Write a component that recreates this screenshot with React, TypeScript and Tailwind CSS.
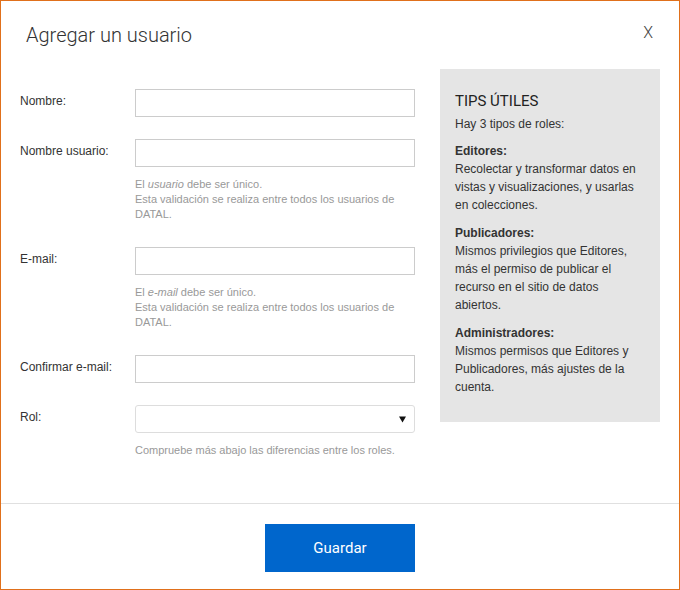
import React from "react";

const Field: React.FC<{ label: string; className?: string; children?: React.ReactNode }> = ({ label, className, children }) => {
    return (
        <div className={"flex " + (className ?? "")}>
            <div className="w-[115px] shrink-0 pt-[4px] text-[12px] leading-[16px] text-[#333]">{label}</div>
            <div className="w-[280px]">{children}</div>
        </div>
    );
};

const Help: React.FC<{ children: React.ReactNode }> = ({ children }) => (
    <p className="mt-[10px] text-[11px] leading-[15px] text-[#999]">{children}</p>
);

const TextInput: React.FC = () => <input type="text" className="block w-full h-[28px] border border-[#ccc] bg-white outline-none px-2" />;

const App: React.FC = () => {
    return (
        <div className="w-[680px] h-[590px] border border-[#e0701b] bg-white flex flex-col font-['Liberation_Sans',Arial,sans-serif]">
            <div className="flex justify-between items-start h-[68px] pl-[25px] pr-[26px] pt-[21px] font-['Roboto',sans-serif]">
                <h1 className="text-[20px] leading-[26px] text-[#333] font-light">Agregar un usuario</h1>
                <button className="text-[16px] leading-[24px] text-[#444] font-light mt-[-1px]">X</button>
            </div>
            <div className="flex flex-1 pl-[19px]">
                <div className="w-[396px] pt-[20px]">
                    <Field label="Nombre:">
                        <TextInput />
                    </Field>
                    <Field label="Nombre usuario:" className="mt-[22px]">
                        <TextInput />
                        <Help>
                            El <i>usuario</i> debe ser único.
                            <br />
                            Esta validación se realiza entre todos los usuarios de DATAL.
                        </Help>
                    </Field>
                    <Field label="E-mail:" className="mt-[25px]">
                        <TextInput />
                        <Help>
                            El <i>e-mail</i> debe ser único.
                            <br />
                            Esta validación se realiza entre todos los usuarios de DATAL.
                        </Help>
                    </Field>
                    <Field label="Confirmar e-mail:" className="mt-[25px]">
                        <TextInput />
                    </Field>
                    <Field label="Rol:" className="mt-[22px]">
                        <div className="relative h-[28px] border border-[#ddd] rounded-[3px] bg-white">
                            <svg className="absolute right-[8px] top-[10px]" width="7" height="7" viewBox="0 0 7 7">
                                <path d="M0 0.5 L7 0.5 L3.5 6.5 Z" fill="#111" />
                            </svg>
                        </div>
                        <Help>Compruebe más abajo las diferencias entre los roles.</Help>
                    </Field>
                </div>
                <div className="ml-[24px] w-[220px] h-[353px] bg-[#e5e5e5] pt-[22px] pl-[15px] pr-[20px] text-[12px] leading-[18px] text-[#333]">
                    <h2 className="text-[15px] leading-[20px] text-[#222] mb-[4px] font-['Roboto',sans-serif]">TIPS ÚTILES</h2>
                    <p className="mb-[9px]">Hay 3 tipos de roles:</p>
                    <p className="font-bold">Editores:</p>
                    <p className="mb-[10px]">Recolectar y transformar datos en vistas y visualizaciones, y usarlas en colecciones.</p>
                    <p className="font-bold">Publicadores:</p>
                    <p className="mb-[10px]">Mismos privilegios que Editores, más el permiso de publicar el recurso en el sitio de datos abiertos.</p>
                    <p className="font-bold">Administradores:</p>
                    <p>Mismos permisos que Editores y Publicadores, más ajustes de la cuenta.</p>
                </div>
            </div>
            <div className="border-t border-[#e0e0e0] h-[86px] flex justify-center pt-[20px] font-['Roboto',sans-serif]">
                <button className="w-[150px] h-[48px] bg-[#0066cc] text-white text-[15px]">Guardar</button>
            </div>
        </div>
    );
};

export default App;
